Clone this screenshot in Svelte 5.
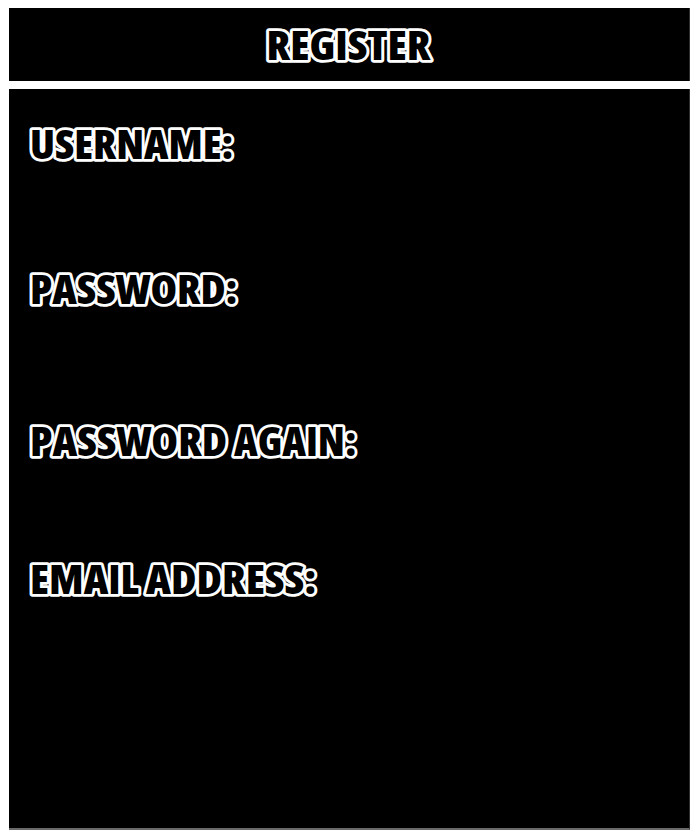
<script>
  const fields = [
    { words: [{ text: 'USERNAME:', x: 21, width: 203.5 }], space: 145 },
    { words: [{ text: 'PASSWORD:', x: 21, width: 207.5 }], space: 152 },
    { words: [{ text: 'PASSWORD', x: 21, width: 197 }, { text: 'AGAIN:', x: 225, width: 122.5 }], space: 138 },
    { words: [{ text: 'EMAIL', x: 21, width: 109 }, { text: 'ADDRESS:', x: 137, width: 170.5 }], space: 60 }
  ];
</script>

<main>
  <header>
    <h1>
      <svg width="180" height="72" aria-label="REGISTER">
        <text x="7.5" y="52.3" textLength="164" lengthAdjust="spacingAndGlyphs">REGISTER</text>
      </svg>
    </h1>
  </header>
  <form>
    {#each fields as field}
      <div class="field" style:height="{field.space}px">
        <svg width="400" height="50">
          {#each field.words as word}
            <text x={word.x} y="40.4" textLength={word.width} lengthAdjust="spacingAndGlyphs">{word.text}</text>
          {/each}
        </svg>
      </div>
    {/each}
  </form>
</main>

<style>
  :global(body) { margin: 0; background: #fff; }
  main {
    box-sizing: border-box;
    width: 697px;
    height: 838px;
    padding: 8px 7px 8px 9px;
    display: flex;
    flex-direction: column;
    gap: 8px;
  }
  header {
    box-sizing: border-box;
    height: 73px;
    background: #000;
    border-right: 1px solid #302e2f;
    display: flex;
    justify-content: center;
  }
  h1 { margin: 0; height: 72px; }
  form {
    box-sizing: border-box;
    height: 741px;
    padding-top: 30px;
    background: #000;
    border-right: 1px solid #302e2f;
    border-bottom: 2px solid #6b696a;
  }
  svg { display: block; overflow: visible; }
  text {
    font-family: "Open Sans", "Noto Sans", sans-serif;
    font-size: 41px;
    font-weight: 800;
    font-stretch: 75%;
    fill: #000;
    stroke: #fff;
    stroke-width: 5.6px;
    stroke-linejoin: round;
    paint-order: stroke;
  }
</style>
